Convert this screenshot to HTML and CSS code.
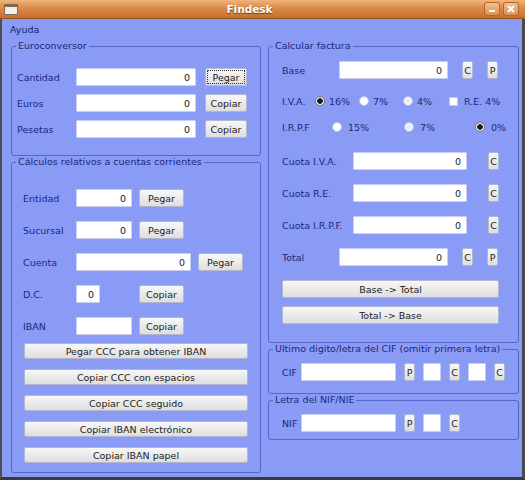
FILE: index.html
```html
<!DOCTYPE html>
<html lang="es">
  <head>
    <meta charset="UTF-8" />
    <title>Findesk</title>
    <link rel="stylesheet" href="styles.css">
  </head>
  <body>
    <div class="window">
      <div class="titlebar">
        <span class="win-icon"></span>
        <span class="title">Findesk</span>
        <span class="tb-btn">
          <svg width="10" height="10" viewBox="0 0 10 10"><rect x="2" y="6" width="6" height="2" fill="#fff"/></svg>
        </span>
        <span class="tb-btn">
          <svg width="10" height="10" viewBox="0 0 10 10"><path d="M2 2 L8 8 M8 2 L2 8" stroke="#fff" stroke-width="2"/></svg>
        </span>
      </div>

      <div class="client">
        <div class="menubar"><span>Ayuda</span></div>

        <div class="content">
          <!-- left column -->
          <div class="col">
            <fieldset class="group">
              <legend>Euroconversor</legend>
              <div class="rows euro">
                <div class="row">
                  <span class="lbl">Cantidad</span>
                  <input class="field" type="text" value="0">
                  <button class="btn focus">Pegar</button>
                </div>
                <div class="row">
                  <span class="lbl">Euros</span>
                  <input class="field" type="text" value="0">
                  <button class="btn">Copiar</button>
                </div>
                <div class="row">
                  <span class="lbl">Pesetas</span>
                  <input class="field" type="text" value="0">
                  <button class="btn">Copiar</button>
                </div>
              </div>
            </fieldset>

            <fieldset class="group cuentas">
              <legend>Cálculos relativos a cuentas corrientes</legend>
              <div class="rows ccc">
                <div class="row">
                  <span class="lbl">Entidad</span>
                  <input class="field short" type="text" value="0">
                  <button class="btn">Pegar</button>
                </div>
                <div class="row">
                  <span class="lbl">Sucursal</span>
                  <input class="field short" type="text" value="0">
                  <button class="btn">Pegar</button>
                </div>
                <div class="row">
                  <span class="lbl">Cuenta</span>
                  <input class="field long" type="text" value="0">
                  <button class="btn">Pegar</button>
                </div>
                <div class="row">
                  <span class="lbl">D.C.</span>
                  <input class="field dc" type="text" value="0">
                  <button class="btn">Copiar</button>
                </div>
                <div class="row">
                  <span class="lbl">IBAN</span>
                  <input class="field short" type="text" value="">
                  <button class="btn">Copiar</button>
                </div>
              </div>
              <div class="wide-list">
                <button class="btn wide">Pegar CCC para obtener IBAN</button>
                <button class="btn wide">Copiar CCC con espacios</button>
                <button class="btn wide">Copiar CCC seguido</button>
                <button class="btn wide">Copiar IBAN electrónico</button>
                <button class="btn wide">Copiar IBAN papel</button>
              </div>
            </fieldset>
          </div>

          <!-- right column -->
          <div class="col">
            <fieldset class="group">
              <legend>Calcular factura</legend>
              <div class="factura">
                <div class="row base">
                  <span class="lbl">Base</span>
                  <input class="field" type="text" value="0">
                  <button class="btn mini">C</button>
                  <button class="btn mini">P</button>
                </div>
                <div class="row choices iva">
                  <span>I.V.A.</span>
                  <span class="opt"><span class="radio on"></span>16%</span>
                  <span class="opt"><span class="radio"></span>7%</span>
                  <span class="opt"><span class="radio dim"></span>4%</span>
                  <span class="opt"><span class="check"></span>R.E. 4%</span>
                </div>
                <div class="row choices irpf">
                  <span>I.R.P.F</span>
                  <span class="opt"><span class="radio"></span>15%</span>
                  <span class="opt"><span class="radio dim"></span>7%</span>
                  <span class="opt"><span class="radio on"></span>0%</span>
                </div>
                <div class="row cuota first">
                  <span class="lbl">Cuota I.V.A.</span>
                  <input class="field" type="text" value="0">
                  <button class="btn mini">C</button>
                </div>
                <div class="row cuota">
                  <span class="lbl">Cuota R.E.</span>
                  <input class="field" type="text" value="0">
                  <button class="btn mini">C</button>
                </div>
                <div class="row cuota">
                  <span class="lbl">Cuota I.R.P.F.</span>
                  <input class="field" type="text" value="0">
                  <button class="btn mini">C</button>
                </div>
                <div class="row base">
                  <span class="lbl">Total</span>
                  <input class="field" type="text" value="0">
                  <button class="btn mini">C</button>
                  <button class="btn mini">P</button>
                </div>
                <button class="btn big">Base -&gt; Total</button>
                <button class="btn big close">Total -&gt; Base</button>
              </div>
            </fieldset>

            <fieldset class="group cif">
              <legend>Ultimo digito/letra del CIF (omitir primera letra)</legend>
              <div class="letter">
                <div class="row">
                  <span class="lbl">CIF</span>
                  <input class="field" type="text" value="">
                  <button class="btn mini">P</button>
                  <input class="field tiny" type="text" value="">
                  <button class="btn mini">C</button>
                  <input class="field tiny" type="text" value="">
                  <button class="btn mini">C</button>
                </div>
              </div>
            </fieldset>

            <fieldset class="group nif">
              <legend>Letra del NIF/NIE</legend>
              <div class="letter">
                <div class="row">
                  <span class="lbl">NIF</span>
                  <input class="field" type="text" value="">
                  <button class="btn mini">P</button>
                  <input class="field tiny" type="text" value="">
                  <button class="btn mini">C</button>
                </div>
              </div>
            </fieldset>
          </div>
        </div>
      </div>
    </div>
  </body>
</html>
```

FILE: styles.css
```css
* {
  box-sizing: border-box;
}

body {
  margin: 0;
  font-family: 'DejaVu Sans', 'Liberation Sans', sans-serif;
  font-size: 9.5px;
  color: #1a2878;
}

.window {
  width: 525px;
  height: 480px;
  display: flex;
  flex-direction: column;
}

/* title bar */
.titlebar {
  height: 19px;
  display: flex;
  align-items: center;
  padding: 0 6px 0 4px;
  background: linear-gradient(#f0b47c, #dc8a47 45%, #c6702f);
  border-bottom: 1px solid #98541f;
}

.win-icon {
  width: 14px;
  height: 11px;
  border: 1px solid #7b6a58;
  border-top-width: 3px;
  border-radius: 1px;
  background: #f5efe6;
}

.title {
  flex: 1;
  text-align: center;
  color: #fff;
  font-weight: bold;
  font-size: 10.5px;
  text-shadow: 0 1px 1px #6a3810;
}

.tb-btn {
  width: 16px;
  height: 14px;
  margin-left: 3px;
  display: flex;
  align-items: center;
  justify-content: center;
  border: 1px solid #b0662c;
  border-radius: 3px;
  background: linear-gradient(#f3c08c, #dc914f);
}

/* client area */
.client {
  flex: 1;
  display: flex;
  flex-direction: column;
  background: #8a9bf6;
  border-left: 2px solid #4e4e4e;
  border-right: 3px solid #4a4a4a;
  border-bottom: 3px solid #3a3a3a;
}

.menubar {
  height: 21px;
  display: flex;
  align-items: center;
  padding-left: 8px;
  color: #17225e;
}

.content {
  display: flex;
  gap: 7px;
  padding: 0 3px 0 9px;
}

.col {
  display: flex;
  flex-direction: column;
}

.col:first-child {
  width: 250px;
}

.col:last-child {
  width: 251px;
}

fieldset.group {
  margin: 0;
  padding: 0 4px;
  min-width: 0;
  border: 1px solid #5666cb;
  border-radius: 3px;
}

legend {
  padding: 0 2px;
  height: 12px;
  line-height: 12px;
}

.cuentas {
  margin-top: 1px;
}

.cif {
  margin-top: 14px;
}

.nif {
  margin-top: 20px;
}

/* generic rows */
.row {
  height: 18px;
  display: flex;
  align-items: center;
}

.lbl {
  flex: none;
  white-space: nowrap;
}

.field {
  flex: none;
  height: 18px;
  padding: 0 5px 0 3px;
  border: 1px solid #c7cff7;
  border-radius: 1px;
  background: #fff;
  font: inherit;
  color: #222;
  text-align: right;
  outline: none;
}

.btn {
  flex: none;
  height: 18px;
  padding: 0;
  border: 1px solid #b3b8d2;
  border-radius: 2px;
  background: linear-gradient(#f8f8f8, #dedede);
  font: inherit;
  color: #222;
}

.btn.focus {
  outline: 1px dotted #333;
  outline-offset: -3px;
}

.btn.mini {
  width: 11px;
}

/* euroconversor */
.euro {
  display: flex;
  flex-direction: column;
  gap: 8px;
  padding: 16px 0 17px 1px;
}

.euro .row {
  gap: 9px;
}

.euro .lbl {
  width: 50px;
}

.euro .field {
  width: 120px;
}

.euro .btn {
  width: 42px;
}

/* cuentas */
.ccc {
  display: flex;
  flex-direction: column;
  gap: 14px;
  padding: 21px 0 0 7px;
}

.ccc .row {
  gap: 7px;
}

.ccc .lbl {
  width: 46px;
}

.ccc .btn {
  width: 45px;
}

.field.short {
  width: 56px;
}

.field.long {
  width: 115px;
}

.field.dc {
  width: 24px;
  margin-right: 32px;
}

.wide-list {
  display: flex;
  flex-direction: column;
  gap: 10px;
  padding: 8px 0 9px 8px;
}

.btn.wide {
  width: 224px;
  height: 16px;
}

/* factura */
.factura {
  display: flex;
  flex-direction: column;
  padding: 9px 0 18px 9px;
}

.base {
  gap: 14px;
}

.base .lbl {
  width: 43px;
}

.base .field {
  width: 109px;
}

.iva,
.irpf {
  display: grid;
  align-items: center;
}

.iva {
  margin-top: 13px;
  grid-template-columns: 33px 44px 44px 46px auto;
}

.irpf {
  margin-top: 8px;
  grid-template-columns: 50px 72px 71px auto;
}

.opt {
  display: flex;
  align-items: center;
  gap: 4px;
  white-space: nowrap;
}

.irpf .opt {
  gap: 6px;
}

.radio {
  width: 10px;
  height: 10px;
  border-radius: 50%;
  border: 1px solid #b9c1ec;
  background: #fff;
}

.radio.dim {
  background: radial-gradient(circle, #e2e4ee, #fff);
}

.radio.on {
  border-color: #6d6d80;
  background: radial-gradient(circle, #1b1b1b 0 2.5px, #fff 3.2px);
}

.check {
  width: 9px;
  height: 9px;
  border: 1px solid #c2c9ef;
  border-radius: 1px;
  background: #fff;
}

.iva .opt:last-child {
  gap: 6px;
}

.cuota {
  margin-top: 14px;
  gap: 21px;
}

.cuota.first {
  margin-top: 16px;
}

.cuota .lbl {
  width: 50px;
}

.cuota .field {
  width: 114px;
}

.cuota + .base {
  margin-top: 14px;
}

.btn.big {
  width: 217px;
  margin-top: 14px;
}

.btn.big.close {
  margin-top: 8px;
}

/* CIF / NIF */
.letter {
  padding: 8px 0 12px 9px;
}

.nif .letter {
  padding-bottom: 7px;
}

.letter .row {
  gap: 8px;
}

.letter .lbl {
  width: 11px;
}

.letter .field {
  width: 95px;
}

.letter .field.tiny {
  width: 18px;
}
```
